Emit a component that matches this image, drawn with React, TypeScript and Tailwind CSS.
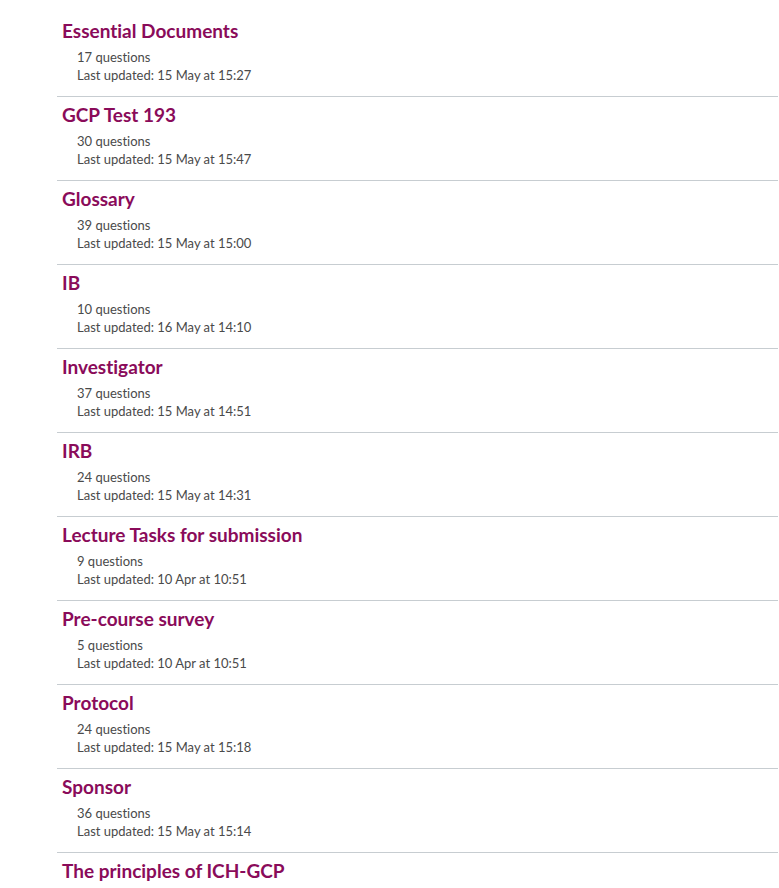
type Quiz = { title: string; count?: number; updated?: string };

const quizzes: Quiz[] = [
  { title: "Essential Documents", count: 17, updated: "15 May at 15:27" },
  { title: "GCP Test 193", count: 30, updated: "15 May at 15:47" },
  { title: "Glossary", count: 39, updated: "15 May at 15:00" },
  { title: "IB", count: 10, updated: "16 May at 14:10" },
  { title: "Investigator", count: 37, updated: "15 May at 14:51" },
  { title: "IRB", count: 24, updated: "15 May at 14:31" },
  { title: "Lecture Tasks for submission", count: 9, updated: "10 Apr at 10:51" },
  { title: "Pre-course survey", count: 5, updated: "10 Apr at 10:51" },
  { title: "Protocol", count: 24, updated: "15 May at 15:18" },
  { title: "Sponsor", count: 36, updated: "15 May at 15:14" },
  // details of the last one fall below the fold
  { title: "The principles of ICH-GCP" },
];

const App = () => {
  return (
    <div className="h-[888px] overflow-hidden bg-white font-['Lato','Noto_Sans',sans-serif] [font-variant-ligatures:none]">
      <ul className="ml-[57px] mr-px pt-[13px]">
        {quizzes.map((q, i) => (
          <li
            key={q.title}
            className={`pt-[6px] pb-[12px] ${i > 0 ? "border-t border-[#c7cdd1]" : ""}`}
          >
            <a href="#" className="block pl-[5px] text-[19px] leading-[24px] font-bold text-[#8a0b5a]">
              {q.title}
            </a>
            {q.count !== undefined && (
              <div className="mt-[5px] pl-[20px] text-[13px] leading-[18px] text-[#4a4a4a]">
                <div>{q.count} questions</div>
                <div>Last updated: {q.updated}</div>
              </div>
            )}
          </li>
        ))}
      </ul>
    </div>
  );
};

export default App;
